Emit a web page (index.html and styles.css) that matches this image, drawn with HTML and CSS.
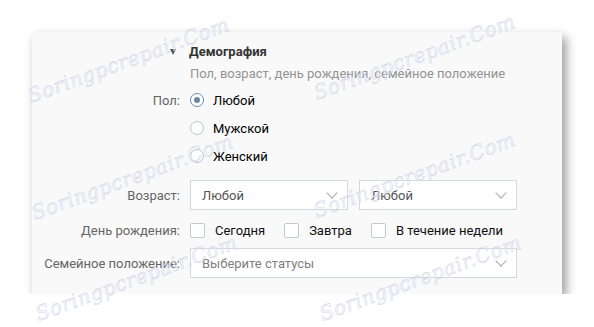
FILE: index.html
```html
<!DOCTYPE html>
<html lang="ru">
<head>
    <meta charset="UTF-8">
    <title>Демография</title>
    <link rel="stylesheet" href="styles.css">
</head>
<body>
    <div class="panel">
        <div class="row head-row">
            <div class="label"><span class="tri"></span></div>
            <div class="title">Демография</div>
        </div>
        <div class="row sub-row">
            <div class="label"></div>
            <div class="subtitle">Пол, возраст, день рождения, семейное положение</div>
        </div>

        <div class="row radio-row">
            <div class="label">Пол:</div>
            <div class="radio checked"><span class="dot"></span>Любой</div>
        </div>
        <div class="row radio-row">
            <div class="label"></div>
            <div class="radio"><span class="dot"></span>Мужской</div>
        </div>
        <div class="row radio-row">
            <div class="label"></div>
            <div class="radio"><span class="dot"></span>Женский</div>
        </div>

        <div class="row select-row age-row">
            <div class="label">Возраст:</div>
            <div class="selects">
                <div class="select">Любой<span class="chev"></span></div>
                <div class="select">Любой<span class="chev"></span></div>
            </div>
        </div>

        <div class="row check-row">
            <div class="label">День рождения:</div>
            <div class="checks">
                <div class="check"><span class="box"></span>Сегодня</div>
                <div class="check"><span class="box"></span>Завтра</div>
                <div class="check"><span class="box"></span>В течение недели</div>
            </div>
        </div>

        <div class="row select-row status-row">
            <div class="label">Семейное положение:</div>
            <div class="select wide placeholder">Выберите статусы<span class="chev"></span></div>
        </div>
    </div>

    <div class="marks">
        <span class="mark m1">Soringpcrepair.Com</span>
        <span class="mark m2">Soringpcrepair.Com</span>
        <span class="mark m3">Soringpcrepair.Com</span>
        <span class="mark m4">Soringpcrepair.Com</span>
        <span class="mark m5">Soringpcrepair.Com</span>
        <span class="mark m6">Soringpcrepair.Com</span>
    </div>
</body>
</html>
```

FILE: styles.css
```css
body {
    margin: 0;
    background: #fff;
    font-family: Roboto, "Liberation Sans", sans-serif;
    font-size: 13px;
    color: #000;
}

.panel {
    margin: 32px 0 0 32px;
    width: 530px;
    height: 262px;
    box-sizing: border-box;
    padding-top: 10px;
    background: #f9f9f9;
    box-shadow: 4px 5px 10px rgba(0, 0, 0, 0.4);
}

.row {
    display: flex;
    align-items: center;
}

.label {
    width: 148px;
    margin-right: 10px;
    text-align: right;
    color: #656565;
    flex-shrink: 0;
}

.head-row {
    height: 18px;
}

.tri {
    display: inline-block;
    width: 0;
    height: 0;
    margin-right: 4px;
    border-left: 3.5px solid transparent;
    border-right: 3.5px solid transparent;
    border-top: 6px solid #555;
    vertical-align: middle;
}

.title {
    font-weight: bold;
    color: #333;
    margin-left: -1px;
}

.sub-row {
    height: 18px;
    margin-top: 4px;
}

.subtitle {
    color: #939393;
}

.radio-row {
    height: 28px;
}

.sub-row + .radio-row {
    margin-top: 4px;
}

.radio {
    display: flex;
    align-items: center;
}

.radio .dot {
    width: 14px;
    height: 14px;
    box-sizing: border-box;
    border: 1px solid #b9c2cc;
    border-radius: 50%;
    background: #fff;
    margin-right: 9px;
    position: relative;
}

.radio.checked .dot {
    border-color: #6d87a6;
}

.radio.checked .dot::after {
    content: "";
    position: absolute;
    left: 3px;
    top: 3px;
    width: 6px;
    height: 6px;
    border-radius: 50%;
    background: #6d87a6;
}

.age-row {
    margin-top: 10px;
}

.selects {
    display: flex;
    gap: 11px;
}

.select {
    width: 158px;
    height: 30px;
    box-sizing: border-box;
    border: 1px solid #d3d9de;
    background: #fff;
    padding: 0 10px 0 11px;
    display: flex;
    align-items: center;
    justify-content: space-between;
    color: #555;
}

.select.wide {
    width: 327px;
}

.placeholder {
    color: #808080;
}

.chev {
    width: 7px;
    height: 7px;
    border-right: 1px solid #a9a9a9;
    border-bottom: 1px solid #a9a9a9;
    transform: rotate(45deg);
    margin: -4px 1px 0 0;
}

.check-row {
    height: 20px;
    margin-top: 10px;
}

.checks {
    display: flex;
}

.check {
    display: flex;
    align-items: center;
    margin-right: 19px;
    color: #111;
}

.check .box {
    width: 15px;
    height: 15px;
    box-sizing: border-box;
    border: 1px solid #c1c9d1;
    border-radius: 2px;
    background: #fff;
    margin-right: 10px;
}

.status-row {
    margin-top: 8px;
}

.marks {
    position: absolute;
    left: 0;
    top: 0;
    width: 594px;
    height: 327px;
    overflow: hidden;
    pointer-events: none;
}

.mark {
    position: absolute;
    font-family: "DejaVu Serif", serif;
    font-style: italic;
    font-size: 20px;
    letter-spacing: 0.5px;
    color: rgba(240, 242, 250, 0.6);
    -webkit-text-stroke: 0.5px rgba(185, 195, 225, 0.65);
    transform: rotate(-20deg);
    transform-origin: center;
    white-space: nowrap;
}

.m1 { left: 22px; top: 48px; }
.m2 { left: 308px; top: 45px; }
.m3 { left: 26px; top: 165px; }
.m4 { left: 308px; top: 163px; }
.m5 { left: 30px; top: 266px; }
.m6 { left: 314px; top: 266px; }
```
